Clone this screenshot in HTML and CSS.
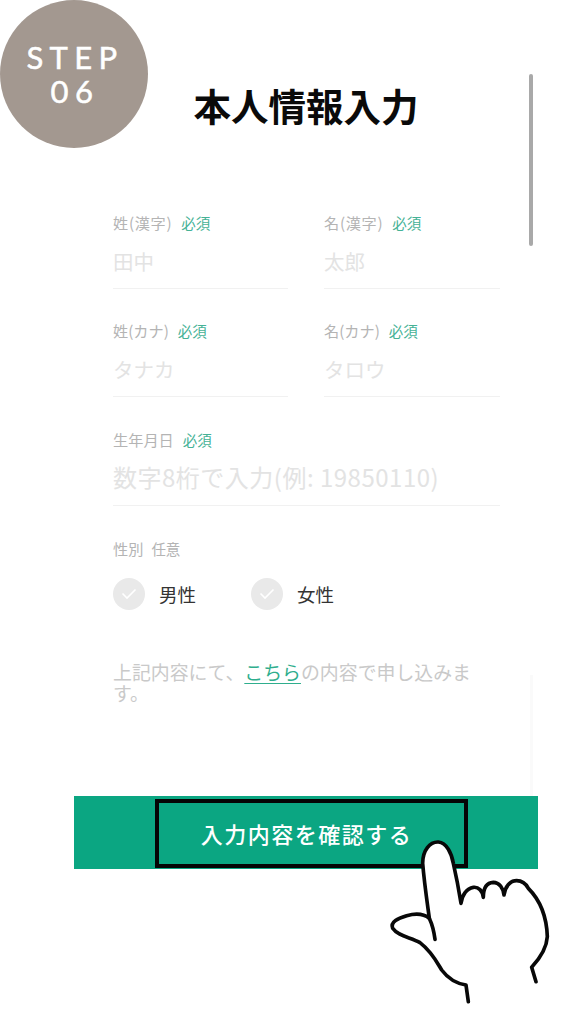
FILE: index.html
```html
<!DOCTYPE html>
<html lang="ja">
<head>
<meta charset="utf-8">
<title>本人情報入力</title>
<link rel="stylesheet" href="styles.css">
</head>
<body>
<div class="page">
  <div class="step"><span>STEP</span><span>06</span></div>
  <div class="scroll-thumb"></div>
  <div class="scroll-track"></div>
  <main class="sheet">
    <h1 class="title">本人情報入力</h1>
    <form class="form">
      <div class="name-grid">
        <div class="field">
          <div class="label label-kanji">姓(漢字)<em class="req">必須</em></div>
          <div class="value">田中</div>
        </div>
        <div class="field">
          <div class="label label-kanji">名(漢字)<em class="req">必須</em></div>
          <div class="value">太郎</div>
        </div>
        <div class="field">
          <div class="label">姓(カナ)<em class="req">必須</em></div>
          <div class="value">タナカ</div>
        </div>
        <div class="field">
          <div class="label">名(カナ)<em class="req">必須</em></div>
          <div class="value">タロウ</div>
        </div>
      </div>
      <div class="field field-wide">
        <div class="label">生年月日<em class="req">必須</em></div>
        <div class="value">数字8桁で入力(例: 19850110)</div>
      </div>
      <div class="label label-gender">性別<em class="opt">任意</em></div>
      <div class="radios">
        <div class="radio">
          <span class="check"><svg viewBox="0 0 32 32" width="32" height="32"><path d="M9.5 15.5l4.5 4.5 8.5-8.5" fill="none" stroke="#fff" stroke-width="1.6"/></svg></span>
          <span class="radio-text">男性</span>
        </div>
        <div class="radio">
          <span class="check"><svg viewBox="0 0 32 32" width="32" height="32"><path d="M9.5 15.5l4.5 4.5 8.5-8.5" fill="none" stroke="#fff" stroke-width="1.6"/></svg></span>
          <span class="radio-text">女性</span>
        </div>
      </div>
      <p class="note">上記内容にて、<a class="link">こちら</a>の内容で申し込みます。</p>
    </form>
    <div class="bar">
      <div class="confirm">入力内容を確認する</div>
    </div>
  </main>
  <svg class="hand" viewBox="0 0 591 600" width="197" height="200">
    <path class="hand-fill" d="M295 545L288 495C255 490 230 470 215 450C200 425 185 395 150 368C125 352 85 350 68 325C60 305 85 295 110 287C135 280 160 280 178 295C172 250 163 190 158 130C158 90 180 65 205 66C230 68 245 100 250 130C258 165 265 200 273 250C276 225 290 205 310 202C325 200 338 212 340 232C340 205 350 188 370 187C388 187 400 205 402 225C405 200 420 182 440 182C455 182 468 192 475 205C510 240 530 290 532 350C530 385 510 415 485 442L498 485Z"/>
    <path class="hand-line" d="M195 358C190 320 185 310 178 295C172 250 163 190 158 130C158 90 180 65 205 66C230 68 245 100 250 130C258 165 265 200 273 250C276 225 290 205 310 202C325 200 338 212 340 232C340 205 350 188 370 187C388 187 400 205 402 225C405 200 420 182 440 182C455 182 468 192 475 205C510 240 530 290 532 350C530 385 510 415 485 442L498 485"/>
    <path class="hand-line" d="M295 545L288 495C255 490 230 470 215 450C200 425 185 395 150 368C125 352 85 350 68 325C60 305 85 295 110 287C135 280 160 280 178 295"/>
  </svg>
</div>
</body>
</html>
```
FILE: styles.css
```css
* { box-sizing: border-box; }
html, body { margin: 0; padding: 0; background: #fff; }
body { font-family: "Noto Sans CJK JP", "Noto Sans", sans-serif; }
.page { position: relative; width: 567px; height: 1024px; overflow: hidden; }

.step {
  position: absolute; left: 0; top: 0; width: 148px; height: 148px; border-radius: 50%;
  background: #a39890; color: #fff; display: flex; flex-direction: column; align-items: center;
  padding: 40px 0 0 2px; font-family: Lato, sans-serif; font-size: 31px; line-height: 34px; letter-spacing: 6.4px;
  -webkit-text-stroke: 0.5px #fff;
}
.scroll-thumb { position: absolute; left: 529px; top: 74px; width: 4px; height: 172px; border-radius: 2px; background: #a9a9a9; }
.scroll-track { position: absolute; left: 530px; top: 675px; width: 3px; height: 121px; background: #fafafa; }

.sheet { margin-left: 74px; width: 464px; padding-top: 83px; }
.title { margin: 0 0 87px; height: 44px; text-align: center; font-size: 37.5px; line-height: 44px; font-weight: 700; color: #0a0a0a; }

.form { padding-left: 39px; width: 426px; height: 582px; }
.name-grid { display: grid; grid-template-columns: 175px 176px; column-gap: 36px; row-gap: 33px; }
.field-wide { margin-top: 34px; width: 387px; }
.label { height: 20px; font-size: 15.2px; line-height: 16px; color: #b4b4b4; }
.label-kanji { letter-spacing: 0.7px; }
.req, .opt { font-style: normal; letter-spacing: 0; margin-left: 9px; color: #46b296; font-size: 14.5px; }
.opt { margin-left: 8px; color: #b4b4b4; font-size: 14.5px; }
.value {
  margin-top: 12px; padding-bottom: 12px; border-bottom: 1px solid #f1f1f1; box-sizing: content-box; height: 30px;
  font-size: 20.5px; line-height: 30px; color: #e3e3e3; white-space: nowrap;
}
.field-wide .value { font-size: 24px; line-height: 28px; letter-spacing: 0.5px; }
.label-gender { margin-top: 34px; }
.radios { display: flex; gap: 55px; margin-top: 18px; }
.radio { display: flex; align-items: center; gap: 14px; height: 32px; }
.check { width: 32px; height: 32px; border-radius: 50%; background: #e9e9e9; display: block; }
.check svg { display: block; }
.radio-text { font-size: 18.5px; color: #333; }
.note { margin: 51px 0 0; width: 372px; font-size: 18.9px; line-height: 21px; color: #c9c9c9; }
.link { color: #2fae8d; text-decoration: underline; text-underline-offset: 3px; }

.bar { height: 73px; background: #0ba682; padding: 3px 70px 1px 81px; }
.confirm {
  height: 69px; border: 4.5px solid #050505; color: #fff; text-align: center; padding-right: 10px;
  font-size: 22px; line-height: 60px; font-weight: 500; letter-spacing: 1.5px;
}

.hand { position: absolute; left: 370px; top: 820px; display: block; }
.hand-fill { fill: #fff; }
.hand-line { fill: none; stroke: #080808; stroke-width: 11; stroke-linecap: round; stroke-linejoin: round; }
```
